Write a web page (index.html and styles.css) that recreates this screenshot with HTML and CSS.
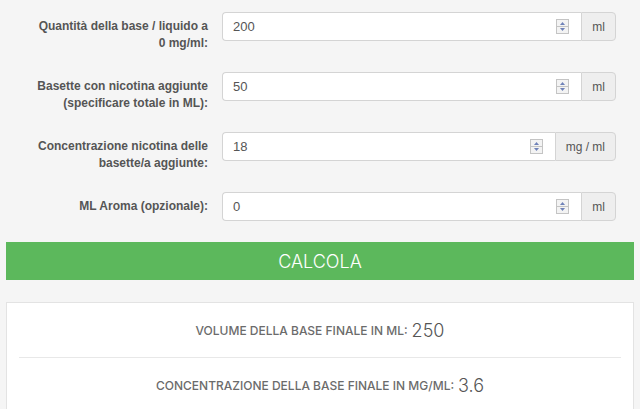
FILE: index.html
```html
<!DOCTYPE html>
<html lang="it">
<head>
<meta charset="utf-8">
<title>Calcolatore nicotina</title>
<link rel="stylesheet" href="styles.css">
</head>
<body>
<div class="page">
  <form class="calc">
    <div class="row">
      <label class="lbl">Quantità della base / liquido a<br>0 mg/ml:</label>
      <div class="group">
        <div class="field">
          <input class="num" type="text" value="200">
          <svg class="spin" width="13" height="15" viewBox="0 0 13 15"><rect x="0.5" y="0.5" width="12" height="14" fill="#f3f3f3" stroke="#c4c4c4"/><line x1="1" y1="7.5" x2="12" y2="7.5" stroke="#c4c4c4"/><polygon points="6.5,3 4,6 9,6" fill="#6f82b8"/><polygon points="4,9 9,9 6.5,12" fill="#6f82b8"/></svg>
        </div>
        <span class="addon">ml</span>
      </div>
    </div>
    <div class="row">
      <label class="lbl">Basette con nicotina aggiunte<br>(specificare totale in ML):</label>
      <div class="group">
        <div class="field">
          <input class="num" type="text" value="50">
          <svg class="spin" width="13" height="15" viewBox="0 0 13 15"><rect x="0.5" y="0.5" width="12" height="14" fill="#f3f3f3" stroke="#c4c4c4"/><line x1="1" y1="7.5" x2="12" y2="7.5" stroke="#c4c4c4"/><polygon points="6.5,3 4,6 9,6" fill="#6f82b8"/><polygon points="4,9 9,9 6.5,12" fill="#6f82b8"/></svg>
        </div>
        <span class="addon">ml</span>
      </div>
    </div>
    <div class="row">
      <label class="lbl">Concentrazione nicotina delle<br>basette/a aggiunte:</label>
      <div class="group">
        <div class="field">
          <input class="num" type="text" value="18">
          <svg class="spin" width="13" height="15" viewBox="0 0 13 15"><rect x="0.5" y="0.5" width="12" height="14" fill="#f3f3f3" stroke="#c4c4c4"/><line x1="1" y1="7.5" x2="12" y2="7.5" stroke="#c4c4c4"/><polygon points="6.5,3 4,6 9,6" fill="#6f82b8"/><polygon points="4,9 9,9 6.5,12" fill="#6f82b8"/></svg>
        </div>
        <span class="addon">mg / ml</span>
      </div>
    </div>
    <div class="row">
      <label class="lbl">ML Aroma (opzionale):</label>
      <div class="group">
        <div class="field">
          <input class="num" type="text" value="0">
          <svg class="spin" width="13" height="15" viewBox="0 0 13 15"><rect x="0.5" y="0.5" width="12" height="14" fill="#f3f3f3" stroke="#c4c4c4"/><line x1="1" y1="7.5" x2="12" y2="7.5" stroke="#c4c4c4"/><polygon points="6.5,3 4,6 9,6" fill="#6f82b8"/><polygon points="4,9 9,9 6.5,12" fill="#6f82b8"/></svg>
        </div>
        <span class="addon">ml</span>
      </div>
    </div>
    <button class="btn" type="button">CALCOLA</button>
  </form>
  <div class="results">
    <div class="res"><span class="rl">VOLUME DELLA BASE FINALE IN ML:</span> <span class="rv">250</span></div>
    <div class="res"><span class="rl">CONCENTRAZIONE DELLA BASE FINALE IN MG/ML:</span> <span class="rv">3.6</span></div>
  </div>
</div>
</body>
</html>
```
FILE: styles.css
```css
html, body {
  margin: 0;
  padding: 0;
  background: #f5f5f5;
}
.page {
  padding: 12px 6px 0 6px;
}
.calc {
  display: flex;
  flex-direction: column;
  gap: 20px;
  margin: 0;
}
.row {
  display: grid;
  grid-template-columns: 202px 394px;
  column-gap: 14px;
  align-items: start;
}
.lbl {
  font-family: "Liberation Sans", Arial, sans-serif;
  font-weight: bold;
  font-size: 12px;
  line-height: 17px;
  color: #555;
  text-align: right;
  padding-top: 6px;
  white-space: nowrap;
}
.group {
  display: flex;
  height: 29px;
}
.field {
  flex: 1;
  display: flex;
  align-items: center;
  background: #fff;
  border: 1px solid #d4d4d4;
  border-right: none;
  border-radius: 4px 0 0 4px;
  min-width: 0;
}
.num {
  flex: 1;
  min-width: 0;
  border: none;
  outline: none;
  background: transparent;
  font-family: "Liberation Sans", Arial, sans-serif;
  font-size: 13px;
  color: #555;
  padding: 0 0 0 10px;
  height: 100%;
}
.spin {
  display: block;
  flex: none;
  margin-right: 12px;
}
.addon {
  display: flex;
  align-items: center;
  background: #eee;
  border: 1px solid #d4d4d4;
  border-radius: 0 4px 4px 0;
  font-family: "Liberation Sans", Arial, sans-serif;
  font-size: 12px;
  color: #555;
  padding: 0 10px;
}
.btn {
  margin-top: 1px;
  height: 38px;
  width: 100%;
  border: none;
  border-radius: 0;
  background: #5cb85c;
  color: #fff;
  font-family: Inter, "Noto Sans", sans-serif;
  font-weight: 300;
  font-size: 18px;
  padding: 0;
  cursor: pointer;
}
.results {
  margin-top: 22px;
  background: #fff;
  border: 1px solid #e3e3e3;
  padding: 0 12px;
}
.res {
  height: 54px;
  display: flex;
  align-items: center;
  justify-content: center;
  gap: 4px;
  border-bottom: 1px solid #e8e8e8;
}
.rl {
  font-family: Inter, "Noto Sans", sans-serif;
  font-weight: 500;
  font-size: 12px;
  color: #6b6b6b;
}
.rv {
  font-family: Inter, "Noto Sans", sans-serif;
  font-weight: 300;
  font-size: 18px;
  color: #555;
}
```
